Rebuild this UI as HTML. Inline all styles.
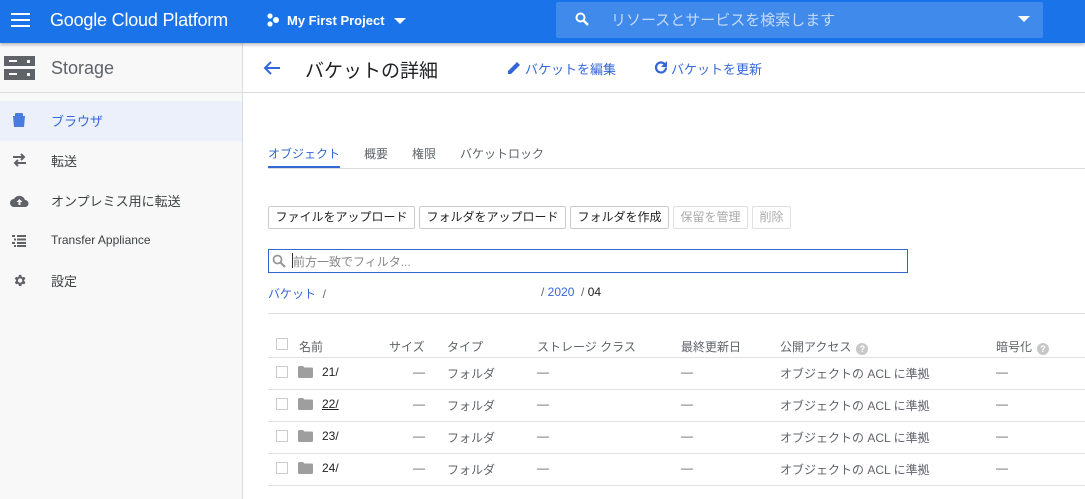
<!DOCTYPE html>
<html><head><meta charset="utf-8"><style>
*{margin:0;padding:0;box-sizing:border-box}
body{width:1085px;height:499px;overflow:hidden;background:#fff;font-family:"Liberation Sans","Noto Sans CJK JP",sans-serif;position:relative;color:#202124}
.a{position:absolute;white-space:nowrap}
.top{left:0;top:0;width:1085px;height:43px;background:#1a73e8;box-shadow:0 2px 3px rgba(0,0,0,.25);z-index:2}
.side{left:0;top:43px;width:243px;height:456px;background:#f8f8f8;border-right:1px solid #dadce0}
.si{font-size:13px;color:#3c4043}
.btn{top:206px;height:23px;border:1px solid #ccc;border-radius:2px;font-size:12px;line-height:21px;text-align:center;color:#202124;background:#fff;overflow:hidden}
.dis{color:#aaa;border-color:#e0e0e0}
.th{top:338px;font-size:12px;color:#5f6368}
.hl{left:268px;width:817px;height:1px;background:#e0e0e0}
.cb{width:12px;height:12px;border:1px solid #ccc;background:#fff}
.c{font-size:12px;color:#5f6368}
.q{display:inline-block;width:12px;height:12px;border-radius:50%;background:#c8c8c8;color:#fff;font-size:9px;text-align:center;line-height:12px;font-weight:bold;vertical-align:-1px;margin-left:5px}
</style></head><body>
<div class="a top">
 <div class="a" style="left:11px;top:13px;width:19px;height:2px;background:#fff;box-shadow:0 6px 0 #fff,0 12px 0 #fff"></div>
 <div class="a" style="left:50px;top:10px;font-size:18px;color:#fff;letter-spacing:-0.2px">Google Cloud Platform</div>
 <svg class="a" style="left:266px;top:12px" width="16" height="16"><circle cx="4" cy="4" r="2.6" fill="#fff"/><circle cx="4" cy="12" r="2.6" fill="#fff"/><circle cx="10" cy="8" r="3" fill="#fff"/></svg>
 <div class="a" style="left:287px;top:13px;font-size:13px;color:#fff;font-weight:bold">My First Project</div>
 <div class="a" style="left:394px;top:18px;border:6px solid transparent;border-top:6px solid #fff"></div>
 <div class="a" style="left:556px;top:2px;width:487px;height:36px;background:#3f8aea;border-radius:2px"></div>
 <svg class="a" style="left:575px;top:12px" width="14" height="14"><circle cx="5.5" cy="5.5" r="4" stroke="#fff" stroke-width="2" fill="none"/><path d="M8.5 8.5L13 13" stroke="#fff" stroke-width="2.4"/></svg>
 <div class="a" style="left:611px;top:9px;font-size:15px;color:#c5dafa">リソースとサービスを検索します</div>
 <div class="a" style="left:1018px;top:16px;border:6px solid transparent;border-top:6px solid #fff"></div>
</div>
<div class="a side"></div>
<div class="a" style="left:0;top:92px;width:1085px;height:1px;background:#dadce0"></div>
<div class="a" style="left:4px;top:56px;width:31px;height:24px;background:#5f6368"></div>
<div class="a" style="left:4px;top:66px;width:31px;height:3px;background:#f8f8f8"></div>
<div class="a" style="left:9px;top:60px;width:8px;height:2px;background:#f8f8f8;box-shadow:0 13px 0 #f8f8f8"></div>
<div class="a" style="left:27px;top:60px;width:3px;height:3px;background:#f8f8f8;box-shadow:0 13px 0 #f8f8f8"></div>
<div class="a" style="left:51px;top:58px;font-size:18px;color:#5f6368">Storage</div>
<div class="a" style="left:0;top:101px;width:242px;height:40px;background:#ebf0fb"></div>
<svg class="a" style="left:12px;top:113px" width="14" height="15"><path d="M1 3h12l-1 11H2z" fill="#4a7be0"/><rect x="3" y="0" width="8" height="4" rx="1" fill="#4a7be0"/></svg>
<div class="a si" style="left:51px;top:111px;color:#3367d6;font-size:13px">ブラウザ</div>
<svg class="a" style="left:12px;top:153px" width="15" height="14"><path d="M1 4h11M9 1l3 3-3 3M14 10H3M6 7l-3 3 3 3" stroke="#5f6368" stroke-width="2" fill="none"/></svg>
<div class="a si" style="left:51px;top:151px">転送</div>
<svg class="a" style="left:10px;top:194px" width="19" height="14"><path d="M4 13a4 4 0 0 1 0-8 6 6 0 0 1 11 1 3.5 3.5 0 0 1 0 7z" fill="#5f6368"/><path d="M9.5 5l-3 3h2v3h2V8h2z" fill="#f8f8f8"/></svg>
<div class="a si" style="left:51px;top:191px">オンプレミス用に転送</div>
<svg class="a" style="left:12px;top:235px" width="14" height="12"><path d="M0 1h3M5 1h9M2 4.5h2M5 4.5h9M0 8h3M5 8h9M2 11h2M5 11h9" stroke="#5f6368" stroke-width="2"/></svg>
<div class="a si" style="left:51px;top:233px;font-size:12px">Transfer Appliance</div>
<svg class="a" style="left:12px;top:273px" width="15" height="15" viewBox="0 0 24 24"><path fill="#5f6368" d="M19.4 13a7.5 7.5 0 0 0 0-2l2.1-1.6-2-3.5-2.5 1a7 7 0 0 0-1.7-1L15 3h-4l-.4 2.9a7 7 0 0 0-1.7 1l-2.5-1-2 3.5L6.6 11a7.5 7.5 0 0 0 0 2l-2.1 1.6 2 3.5 2.5-1a7 7 0 0 0 1.7 1L11 21h4l.4-2.9a7 7 0 0 0 1.7-1l2.5 1 2-3.5zM13 15.5a3.5 3.5 0 1 1 0-7 3.5 3.5 0 0 1 0 7z"/></svg>
<div class="a si" style="left:51px;top:271px">設定</div>

<svg class="a" style="left:262px;top:60px" width="20" height="16"><path d="M18 8H3M9 2L3 8l6 6" stroke="#3367d6" stroke-width="2" fill="none"/></svg>
<div class="a" style="left:305px;top:56px;font-size:19px;color:#202124">バケットの詳細</div>
<svg class="a" style="left:507px;top:60px" width="15" height="15"><path d="M1 14v-3l9-9 3 3-9 9z" fill="#3367d6"/></svg>
<div class="a" style="left:525px;top:59px;font-size:13px;color:#3367d6">バケットを編集</div>
<svg class="a" style="left:654px;top:60px" width="15" height="15"><path d="M12 7.5a5 5 0 1 1-1.5-3.6" stroke="#3367d6" stroke-width="2.2" fill="none"/><path d="M13 1v6H7z" fill="#3367d6"/></svg>
<div class="a" style="left:671px;top:59px;font-size:13px;color:#3367d6">バケットを更新</div>

<div class="a" style="left:268px;top:145px;font-size:12px;color:#3367d6">オブジェクト</div>
<div class="a" style="left:364px;top:145px;font-size:12px;color:#5f6368">概要</div>
<div class="a" style="left:412px;top:145px;font-size:12px;color:#5f6368">権限</div>
<div class="a" style="left:460px;top:145px;font-size:12px;color:#5f6368">バケットロック</div>
<div class="a" style="left:268px;top:168px;width:817px;height:1px;background:#dadce0"></div>
<div class="a" style="left:268px;top:166px;width:72px;height:2px;background:#3367d6"></div>

<div class="a btn" style="left:268px;width:147px">ファイルをアップロード</div>
<div class="a btn" style="left:419px;width:147px">フォルダをアップロード</div>
<div class="a btn" style="left:570px;width:99px">フォルダを作成</div>
<div class="a btn dis" style="left:673px;width:75px">保留を管理</div>
<div class="a btn dis" style="left:752px;width:39px">削除</div>

<div class="a" style="left:268px;top:249px;width:640px;height:24px;border:1px solid #3367d6"></div>
<svg class="a" style="left:272px;top:254px" width="14" height="14"><circle cx="5.5" cy="5.5" r="4" stroke="#999" stroke-width="1.8" fill="none"/><path d="M8.5 8.5L13 13" stroke="#999" stroke-width="2.2"/></svg>
<div class="a" style="left:292px;top:253px;width:1px;height:15px;background:#333"></div>
<div class="a" style="left:293px;top:253px;font-size:12px;color:#888">前方一致でフィルタ...</div>

<div class="a" style="left:268px;top:285px;font-size:12px;color:#3367d6">バケット <span style="color:#5f6368">&nbsp;/</span></div>
<div class="a" style="left:541px;top:285px;font-size:12px;color:#5f6368">/ <span style="color:#3367d6">2020</span> &nbsp;/ <span style="color:#202124">04</span></div>
<div class="a hl" style="top:313px"></div>

<div class="a cb" style="left:276px;top:338px"></div>
<div class="a th" style="left:299px">名前</div>
<div class="a th" style="left:389px">サイズ</div>
<div class="a th" style="left:447px">タイプ</div>
<div class="a th" style="left:537px">ストレージ クラス</div>
<div class="a th" style="left:681px">最終更新日</div>
<div class="a th" style="left:780px">公開アクセス<span class="q">?</span></div>
<div class="a th" style="left:996px">暗号化<span class="q">?</span></div>
<div class="a hl" style="top:357px"></div>
<div class="a hl" style="top:389px"></div>
<div class="a hl" style="top:421px"></div>
<div class="a hl" style="top:453px"></div>
<div class="a hl" style="top:485px"></div>

<div class="a cb" style="left:276px;top:366px"></div><svg class="a" style="left:298px;top:366px" width="15" height="12"><path d="M0 1.5Q0 0 1.5 0H5l1.5 1.5h7Q15 1.5 15 3v7.5Q15 12 13.5 12h-12Q0 12 0 10.5z" fill="#9e9e9e"/></svg><div class="a c" style="left:322px;top:365px;color:#202124">21/</div><div class="a c" style="left:413px;top:365px">—</div><div class="a c" style="left:447px;top:365px">フォルダ</div><div class="a c" style="left:537px;top:365px">—</div><div class="a c" style="left:681px;top:365px">—</div><div class="a c" style="left:780px;top:365px">オブジェクトの ACL に準拠</div><div class="a c" style="left:996px;top:365px">—</div>
<div class="a cb" style="left:276px;top:398px"></div><svg class="a" style="left:298px;top:398px" width="15" height="12"><path d="M0 1.5Q0 0 1.5 0H5l1.5 1.5h7Q15 1.5 15 3v7.5Q15 12 13.5 12h-12Q0 12 0 10.5z" fill="#9e9e9e"/></svg><div class="a c" style="left:322px;top:397px;color:#202124;text-decoration:underline">22/</div><div class="a c" style="left:413px;top:397px">—</div><div class="a c" style="left:447px;top:397px">フォルダ</div><div class="a c" style="left:537px;top:397px">—</div><div class="a c" style="left:681px;top:397px">—</div><div class="a c" style="left:780px;top:397px">オブジェクトの ACL に準拠</div><div class="a c" style="left:996px;top:397px">—</div>
<div class="a cb" style="left:276px;top:430px"></div><svg class="a" style="left:298px;top:430px" width="15" height="12"><path d="M0 1.5Q0 0 1.5 0H5l1.5 1.5h7Q15 1.5 15 3v7.5Q15 12 13.5 12h-12Q0 12 0 10.5z" fill="#9e9e9e"/></svg><div class="a c" style="left:322px;top:429px;color:#202124">23/</div><div class="a c" style="left:413px;top:429px">—</div><div class="a c" style="left:447px;top:429px">フォルダ</div><div class="a c" style="left:537px;top:429px">—</div><div class="a c" style="left:681px;top:429px">—</div><div class="a c" style="left:780px;top:429px">オブジェクトの ACL に準拠</div><div class="a c" style="left:996px;top:429px">—</div>
<div class="a cb" style="left:276px;top:462px"></div><svg class="a" style="left:298px;top:462px" width="15" height="12"><path d="M0 1.5Q0 0 1.5 0H5l1.5 1.5h7Q15 1.5 15 3v7.5Q15 12 13.5 12h-12Q0 12 0 10.5z" fill="#9e9e9e"/></svg><div class="a c" style="left:322px;top:461px;color:#202124">24/</div><div class="a c" style="left:413px;top:461px">—</div><div class="a c" style="left:447px;top:461px">フォルダ</div><div class="a c" style="left:537px;top:461px">—</div><div class="a c" style="left:681px;top:461px">—</div><div class="a c" style="left:780px;top:461px">オブジェクトの ACL に準拠</div><div class="a c" style="left:996px;top:461px">—</div>
</body></html>
